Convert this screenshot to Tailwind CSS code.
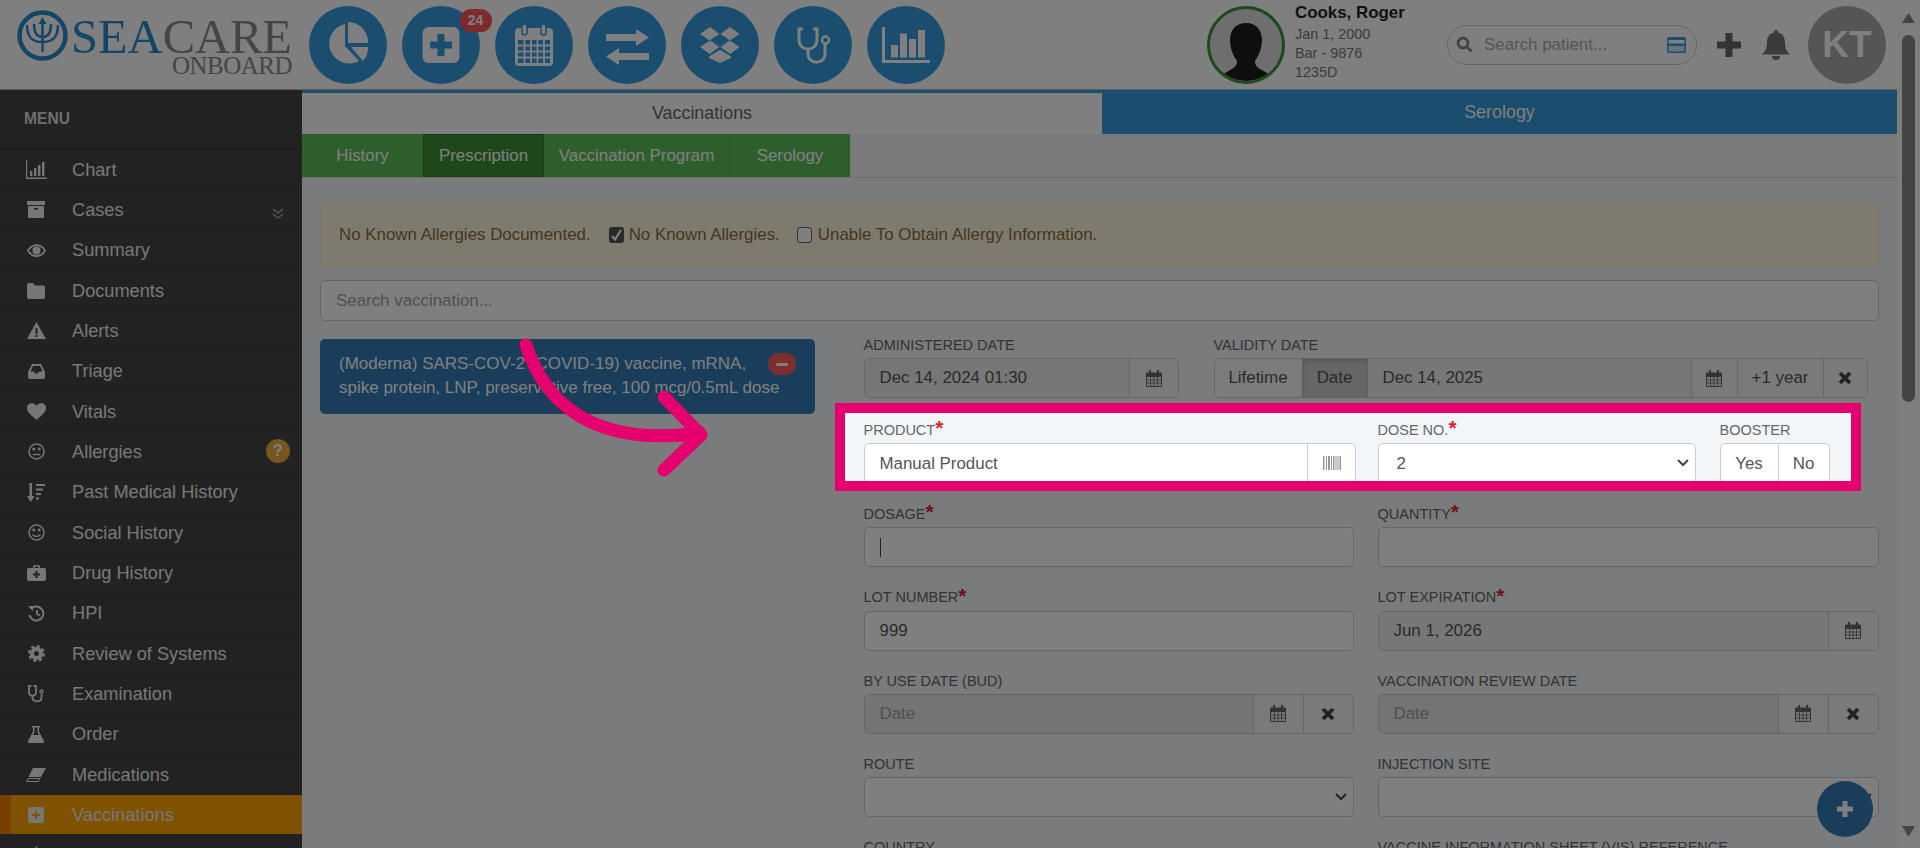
<!DOCTYPE html>
<html lang="en">
<head>
    <meta charset="UTF-8">
    <title>SeaCare Onboard - Vaccinations</title>
    <script src="https://cdn.jsdelivr.net/npm/@tailwindcss/browser@4"></script>
</head>
<body class="relative h-[848px] overflow-hidden bg-[#f4f7f8] font-['Liberation_Sans',Arial,sans-serif] text-[16.9px] text-[#666]">
    <svg class="hidden">
        <symbol id="cal" viewBox="0 0 16 17">
            <path fill="currentColor" d="M3 0h2v2.5h6V0h2v2.5h2a1 1 0 0 1 1 1V16a1 1 0 0 1-1 1H1a1 1 0 0 1-1-1V3.500a1 1 0 0 1 1-1h2zM1 7v9h14V7z"/>
            <path stroke="currentColor" stroke-width=".8" d="M1 10h14M1 13h14M4.500 7v9M8 7v9M11.500 7v9"/>
        </symbol>
        <symbol id="times" viewBox="0 0 14 14">
            <path stroke="currentColor" stroke-width="3.800" d="M2 2l10 10M12 2L2 12"/>
        </symbol>
    </svg>

    <div class="flex h-[848px]">
        <div class="flex w-[1897px] flex-col">
            <!-- top bar -->
            <header class="flex h-[90px] shrink-0 items-center border-b border-[#bbb] bg-white">
                <div class="flex h-full w-[309px] shrink-0 items-start pl-[17px]">
                    <svg class="mt-[10px] h-[51px] w-[51px] shrink-0 text-[#2a8ac9]" viewBox="0 0 51 51" fill="none" stroke="currentColor">
                        <circle cx="25.500" cy="25.500" r="23" stroke-width="4.500"/>
                        <path stroke-width="2.500" d="M25.500 10v32M10 15c0 12 5 17 15.500 17S41 27 41 15M17 14c0 9 3 13 8.500 13S34 23 34 14"/>
                        <path fill="currentColor" stroke="none" d="M25.500 7l4 7h-8z"/>
                    </svg>
                    <div class="ml-[6px] flex w-[218px] flex-col items-end pt-[17.85px] font-['Liberation_Serif',serif]">
                        <div class="text-[48.5px] leading-[37px] text-[#8a8a8a]"><span class="text-[#2a8ac9]">SEA</span>CARE</div>
                        <div class="text-[25px] leading-[21px] tracking-[-0.5px] text-[#8a8a8a]">ONBOARD</div>
                    </div>
                </div>

                <div class="flex shrink-0 gap-[15px] text-white">
                    <div class="h-[78px] w-[78px] rounded-full bg-[#349adc]">
                        <svg viewBox="0 0 78 78" fill="currentColor"><path d="M36 18A20 20 0 1 0 50 55L36 40Z"/><path d="M39 16a20 20 0 0 1 20 21H39z"/><path d="M42 41h17a20 20 0 0 1-5 14z"/></svg>
                    </div>
                    <div class="relative h-[78px] w-[78px] rounded-full bg-[#349adc]">
                        <svg viewBox="0 0 78 78"><rect x="20.500" y="21" width="37" height="36" rx="6" fill="currentColor"/><path d="M39 28v22M28 39h22" stroke="#349adc" stroke-width="7"/></svg>
                        <span class="absolute left-[57.5px] top-[3px] flex h-[23px] w-[32px] items-center justify-center rounded-full bg-[#fd5555] text-[14px] font-bold text-white">24</span>
                    </div>
                    <div class="h-[78px] w-[78px] rounded-full bg-[#349adc]">
                        <svg viewBox="0 0 78 78" fill="currentColor">
                            <rect x="20" y="22" width="38" height="38" rx="4"/>
                            <rect x="23" y="34" width="32" height="23" fill="#349adc"/>
                            <path d="M23 39.500h32M23 45.500h32M23 51.500h32M29.500 34v23M36 34v23M42.500 34v23M49 34v23" stroke="currentColor" stroke-width="1.800"/>
                            <rect x="27" y="18" width="5" height="11" rx="2.500" stroke="#349adc" stroke-width="1.500"/>
                            <rect x="46" y="18" width="5" height="11" rx="2.500" stroke="#349adc" stroke-width="1.500"/>
                        </svg>
                    </div>
                    <div class="h-[78px] w-[78px] rounded-full bg-[#349adc]">
                        <svg viewBox="0 0 78 78" fill="currentColor"><path d="M18 28h30v-5l13 8.500L48 40v-5H18z"/><path d="M61 47H31v-5l-13 8.500L31 59v-5h30z"/></svg>
                    </div>
                    <div class="h-[78px] w-[78px] rounded-full bg-[#349adc]">
                        <svg viewBox="0 0 78 78" fill="currentColor"><path d="M19 28l10-7 9.500 7-10 6.500z"/><path d="M39.500 28l9.500-7 9.500 7-9.500 6.500z"/><path d="M19 41l10-6.500 9.500 6.500-10 7z"/><path d="M39.500 41l9.500-6.500 9.500 6.500-9.500 7z"/><path d="M28 50.500l11-6.500 11 6.500v1.500L39 57l-11-5z"/></svg>
                    </div>
                    <div class="h-[78px] w-[78px] rounded-full bg-[#349adc]">
                        <svg viewBox="0 0 78 78" fill="none" stroke="currentColor" stroke-width="3"><path d="M29 23h-4v11c0 12 18 12 18 0V23h-4"/><path d="M34 43v5c0 11 17 11 17 0v-10"/><circle cx="51.500" cy="34" r="3.500" stroke-width="2.500"/></svg>
                    </div>
                    <div class="h-[78px] w-[78px] rounded-full bg-[#349adc]">
                        <svg viewBox="0 0 78 78" fill="currentColor"><path d="M15 21h3v33h45v3H15z"/><rect x="24" y="39" width="7" height="12.500"/><rect x="33" y="27.500" width="7" height="24"/><rect x="42" y="33" width="7" height="18.500"/><rect x="51" y="24" width="7" height="27.500"/></svg>
                    </div>
                </div>

                <div class="ml-[262px] h-[78px] w-[78px] shrink-0 overflow-hidden rounded-full border-[3px] border-[#3a9136] bg-[#ddd]">
                    <svg viewBox="0 0 72 72" class="h-full w-full"><path fill="#1c1c1c" d="M36 14C46 14 52 21 52 31C52 40 48 48 45 52C45 56 47 59 52 61L60 66V78H12V66L20 61C25 59 27 56 27 52C24 48 20 40 20 31C20 21 26 14 36 14Z"/></svg>
                </div>
                <div class="ml-[10px] w-[152px] shrink-0 self-start">
                    <div class="pt-[3px] font-bold leading-[20px] text-[#222]">Cooks, Roger</div>
                    <div class="mt-[1.5px] text-[14.4px] leading-[19px] text-[#777]">Jan 1, 2000</div>
                    <div class="text-[14.4px] leading-[19px] text-[#777]">Bar - 9876</div>
                    <div class="text-[14.4px] leading-[19px] text-[#777]">1235D</div>
                </div>

                <div class="flex h-[40px] w-[250px] shrink-0 items-center rounded-full border border-[#ccc] pl-[8px] pr-[10px]">
                    <svg class="h-[17px] w-[17px] shrink-0 text-[#888]" viewBox="0 0 17 17" fill="none" stroke="currentColor" stroke-width="2.800"><circle cx="7" cy="7" r="5"/><path d="M11 11l4.500 4.500"/></svg>
                    <span class="ml-[11px] text-[#aaa]">Search patient...</span>
                    <svg class="ml-auto h-[16px] w-[19px] shrink-0" viewBox="0 0 19 16"><rect width="19" height="16" rx="2" fill="#349adc"/><rect x="1.500" y="3" width="16" height="3.500" fill="#fff"/><rect x="1.500" y="9" width="16" height="5.500" fill="#cfe6f7"/></svg>
                </div>
                <svg class="ml-[20px] h-[24px] w-[24px] shrink-0 text-[#666]" viewBox="0 0 24 24"><path stroke="currentColor" stroke-width="7" d="M12 0v24M0 12h24"/></svg>
                <svg class="ml-[21px] h-[30px] w-[28px] shrink-0 text-[#777]" viewBox="0 0 28 30" fill="currentColor"><path d="M14 0a2 2 0 0 1 2 2.500c5 1 7 5 7 10 0 6 2 9 5 12H0c3-3 5-6 5-12 0-5 2-9 7-10A2 2 0 0 1 14 0z"/><path d="M10 26h8a4 4 0 0 1-8 0z"/></svg>
                <div class="ml-[18px] flex h-[78px] w-[78px] shrink-0 items-center justify-center rounded-full bg-[#aaa] text-[37px] font-bold text-white">KT</div>
            </header>

            <div class="flex min-h-0 flex-1">
                <!-- side menu -->
                <aside class="w-[302px] shrink-0 overflow-hidden bg-[#444] text-[18.2px] text-[#eee]">
                    <div class="flex h-[60px] items-center border-b border-[#333] pb-[2px] pl-[24px] text-[15.6px] font-bold text-[#ddd]">MENU</div>

                    <div class="flex h-[40.33px] items-center border-b border-[#3c3c3c]">
                        <span class="flex w-[72px] justify-center"><svg class="h-[19px] w-[21px]" viewBox="0 0 21 19" fill="currentColor"><path d="M0 0h1.200v17.500H21V19H0z"/><path d="M4 11h2.400v5H4zM8 8h2.400v8H8zM12 5h2.400v11H12zM16 2h2.400v14H16z"/></svg></span>
                        <span class="pt-[1.5px]">Chart</span>
                    </div>
                    <div class="relative flex h-[40.33px] items-center border-b border-[#3c3c3c]">
                        <span class="flex w-[72px] justify-center"><svg class="h-[17px] w-[18px]" viewBox="0 0 18 17" fill="currentColor"><path d="M0 0h18v4H0zM1 5h16v12H1zM7 7v1.500h4V7z" fill-rule="evenodd"/></svg></span>
                        <span class="pt-[1.5px]">Cases</span>
                        <svg class="absolute left-[272px] top-[18px] h-[12px] w-[12px] text-[#aaa]" viewBox="0 0 12 12" fill="none" stroke="currentColor" stroke-width="1.500"><path d="M1 1l5 4 5-4M1 6l5 4 5-4"/></svg>
                    </div>
                    <div class="flex h-[40.33px] items-center border-b border-[#3c3c3c]">
                        <span class="flex w-[72px] justify-center"><svg class="h-[13px] w-[19px]" viewBox="0 0 19 13" fill="currentColor" fill-rule="evenodd"><path d="M0 6.500C4-2 15-2 19 6.500 15 15 4 15 0 6.500zM2 6.500c3.500 6 11.500 6 15 0-3.500-6-11.500-6-15 0z"/><circle cx="9.500" cy="6.500" r="4"/></svg></span>
                        <span class="pt-[1.5px]">Summary</span>
                    </div>
                    <div class="flex h-[40.33px] items-center border-b border-[#3c3c3c]">
                        <span class="flex w-[72px] justify-center"><svg class="h-[16px] w-[18px]" viewBox="0 0 18 16" fill="currentColor"><path d="M0 2a2 2 0 0 1 2-2h4l2 2.500h8a2 2 0 0 1 2 2V14a2 2 0 0 1-2 2H2a2 2 0 0 1-2-2z"/></svg></span>
                        <span class="pt-[1.5px]">Documents</span>
                    </div>
                    <div class="flex h-[40.33px] items-center border-b border-[#3c3c3c]">
                        <span class="flex w-[72px] justify-center"><svg class="h-[17px] w-[19px]" viewBox="0 0 19 17" fill="currentColor" fill-rule="evenodd"><path d="M9.500 0L19 17H0zM8.500 6v6h2V6zM8.500 13v2h2v-2z"/></svg></span>
                        <span class="pt-[1.5px]">Alerts</span>
                    </div>
                    <div class="flex h-[40.33px] items-center border-b border-[#3c3c3c]">
                        <span class="flex w-[72px] justify-center"><svg class="h-[15px] w-[17px]" viewBox="0 0 17 15" fill="currentColor" fill-rule="evenodd"><path d="M4 0h9l4 8v5a2 2 0 0 1-2 2H2a2 2 0 0 1-2-2V8zM5 2L2.500 7.500H6l1 2h3l1-2h3.500L12 2z"/></svg></span>
                        <span class="pt-[1.5px]">Triage</span>
                    </div>
                    <div class="flex h-[40.33px] items-center border-b border-[#3c3c3c]">
                        <span class="flex w-[72px] justify-center"><svg class="h-[17px] w-[19px]" viewBox="0 0 19 17" fill="currentColor"><path d="M9.500 17C3 11 0 9 0 5a5 5 0 0 1 9.500-2A5 5 0 0 1 19 5c0 4-3 6-9.500 12z"/></svg></span>
                        <span class="pt-[1.5px]">Vitals</span>
                    </div>
                    <div class="relative flex h-[40.33px] items-center border-b border-[#3c3c3c]">
                        <span class="flex w-[72px] justify-center"><svg class="h-[17px] w-[17px]" viewBox="0 0 17 17" fill="none" stroke="currentColor" stroke-width="1.500"><circle cx="8.500" cy="8.500" r="7.500"/><path d="M5 11.500h7"/><circle cx="5.800" cy="6" r=".8"/><circle cx="11.200" cy="6" r=".8"/></svg></span>
                        <span class="pt-[1.5px]">Allergies</span>
                        <span class="absolute left-[266px] top-[7px] flex h-[24px] w-[24px] items-center justify-center rounded-full bg-[#f0a840] text-[16px] font-bold text-white">?</span>
                    </div>
                    <div class="flex h-[40.33px] items-center border-b border-[#3c3c3c]">
                        <span class="flex w-[72px] justify-center"><svg class="h-[19px] w-[18px]" viewBox="0 0 18 19" fill="currentColor"><path d="M2.500 0h2.500v13h2.500l-3.750 6L0 13h2.500z"/><path d="M9 1h9v2H9zM9 5.500h7v2H9zM9 10h5v2H9zM9 14.500h3v2H9z"/></svg></span>
                        <span class="pt-[1.5px]">Past Medical History</span>
                    </div>
                    <div class="flex h-[40.33px] items-center border-b border-[#3c3c3c]">
                        <span class="flex w-[72px] justify-center"><svg class="h-[17px] w-[17px]" viewBox="0 0 17 17" fill="none" stroke="currentColor" stroke-width="1.500"><circle cx="8.500" cy="8.500" r="7.500"/><path d="M4.500 10.500c2 2.500 6 2.500 8 0"/><circle cx="5.800" cy="6" r=".8"/><circle cx="11.200" cy="6" r=".8"/></svg></span>
                        <span class="pt-[1.5px]">Social History</span>
                    </div>
                    <div class="flex h-[40.33px] items-center border-b border-[#3c3c3c]">
                        <span class="flex w-[72px] justify-center"><svg class="h-[16px] w-[19px]" viewBox="0 0 19 16" fill="currentColor" fill-rule="evenodd"><path d="M6 3V1.500A1.500 1.500 0 0 1 7.500 0h4A1.500 1.500 0 0 1 13 1.500V3h4a2 2 0 0 1 2 2v9a2 2 0 0 1-2 2H2a2 2 0 0 1-2-2V5a2 2 0 0 1 2-2zM7.500 1.500V3h4V1.500zM8.500 6v2.500H6v2h2.500V13h2v-2.500H13v-2h-2.500V6z"/></svg></span>
                        <span class="pt-[1.5px]">Drug History</span>
                    </div>
                    <div class="flex h-[40.33px] items-center border-b border-[#3c3c3c]">
                        <span class="flex w-[72px] justify-center"><svg class="h-[17px] w-[17px]" viewBox="0 0 17 17" fill="none" stroke="currentColor" stroke-width="2"><path d="M3 4a7 7 0 1 1-1.500 6"/><path d="M9 5v4l3 1.500" stroke-width="1.800"/><path d="M0 1h5v5z" fill="currentColor" stroke="none"/></svg></span>
                        <span class="pt-[1.5px]">HPI</span>
                    </div>
                    <div class="flex h-[40.33px] items-center border-b border-[#3c3c3c]">
                        <span class="flex w-[72px] justify-center"><svg class="h-[17px] w-[17px]" viewBox="0 0 17 17" fill="none" stroke="currentColor"><circle cx="8.500" cy="8.500" r="4.500" stroke-width="4"/><circle cx="8.500" cy="8.500" r="7.300" stroke-width="2.400" stroke-dasharray="3.200 2.530"/></svg></span>
                        <span class="pt-[1.5px]">Review of Systems</span>
                    </div>
                    <div class="flex h-[40.33px] items-center border-b border-[#3c3c3c]">
                        <span class="flex w-[72px] justify-center"><svg class="h-[18px] w-[16px]" viewBox="0 0 16 18" fill="none" stroke="currentColor" stroke-width="1.800"><path d="M3.500 1H1v6c0 5 7 5 7 0V1H5.500"/><path d="M4.500 10v2.500c0 5 9 5 9 0V9"/><circle cx="13.500" cy="6.500" r="1.500" stroke-width="1.400"/></svg></span>
                        <span class="pt-[1.5px]">Examination</span>
                    </div>
                    <div class="flex h-[40.33px] items-center border-b border-[#3c3c3c]">
                        <span class="flex w-[72px] justify-center"><svg class="h-[17px] w-[16px]" viewBox="0 0 16 17" fill="currentColor" fill-rule="evenodd"><path d="M4 0h8v1.500h-1v4l5 9.500a1.300 1.300 0 0 1-1 2H1a1.300 1.300 0 0 1-1-2l5-9.500v-4H4zM6.500 1.500v4.500L5 9h6L9.500 6V1.500z"/></svg></span>
                        <span class="pt-[1.5px]">Order</span>
                    </div>
                    <div class="flex h-[40.33px] items-center border-b border-[#3c3c3c]">
                        <span class="flex w-[72px] justify-center"><svg class="h-[14px] w-[20px]" viewBox="0 0 20 14" fill="currentColor"><path d="M7 0h13l-5 9H2.500z"/><path d="M2 10h12.500l-2 4H0zM2.500 11l-.8 2h10.300l1-2z" fill-rule="evenodd"/></svg></span>
                        <span class="pt-[1.5px]">Medications</span>
                    </div>
                    <div class="flex h-[39px] items-center bg-[#ffa500]">
                        <span class="h-full w-[11px] shrink-0 bg-[#f47f00]"></span>
                        <span class="flex w-[61px] pl-[17px]"><svg class="h-[16px] w-[16px]" viewBox="0 0 16 16" fill="currentColor" fill-rule="evenodd"><path d="M3 0h10a3 3 0 0 1 3 3v10a3 3 0 0 1-3 3H3a3 3 0 0 1-3-3V3a3 3 0 0 1 3-3zM7 4v3H4v2h3v3h2V9h3V7H9V4z"/></svg></span>
                        <span class="pt-[1.5px]">Vaccinations</span>
                    </div>
                    <div class="flex h-[40.33px] items-center">
                        <span class="flex w-[72px] justify-center"><svg class="h-[17px] w-[17px]" viewBox="0 0 17 17" fill="currentColor"><path d="M8.500 0L12 6H5z"/></svg></span>
                        <span class="pt-[1.5px]">Assessment</span>
                    </div>
                </aside>

                <!-- content -->
                <main class="flex min-w-0 flex-1 flex-col">
                    <div class="flex h-[44px] shrink-0 text-[17.9px]">
                        <div class="flex w-[800px] items-center justify-center border-t-[3px] border-[#349adc] bg-white text-[#666]">Vaccinations</div>
                        <div class="flex flex-1 items-center justify-center bg-[#349adc] text-white">Serology</div>
                    </div>
                    <div class="flex h-[44px] shrink-0 border-b border-[#ddd]">
                        <div class="flex w-[121px] items-center justify-center bg-[#5fbc5b] text-white">History</div>
                        <div class="flex w-[121px] items-center justify-center border border-[#2c7a29] bg-[#3c8f38] text-white">Prescription</div>
                        <div class="flex w-[186px] items-center justify-center border-r border-[#55ad52] bg-[#5fbc5b] text-white">Vaccination Program</div>
                        <div class="flex w-[120px] items-center justify-center bg-[#5fbc5b] text-white">Serology</div>
                    </div>

                    <div class="px-[18px] pt-[24px]">
                        <div class="flex h-[66px] items-center rounded-[5px] border border-[#f0ead0] bg-[#fcf7dc] px-[18px] text-[#8a6d3b]">
                            <span class="mr-[18px]">No Known Allergies Documented.</span>
                            <span class="flex h-[16px] w-[15px] items-center justify-center rounded-[3px] bg-[#555]"><svg class="h-[12px] w-[11px]" viewBox="0 0 11 12" fill="none" stroke="#fff" stroke-width="2.200"><path d="M1 7l3 3.500L10 1"/></svg></span>
                            <span class="ml-[5px] mr-[17px]">No Known Allergies.</span>
                            <span class="h-[16px] w-[15px] rounded-[3px] border border-[#666] bg-white"></span>
                            <span class="ml-[6px]">Unable To Obtain Allergy Information.</span>
                        </div>

                        <div class="mt-[12px] flex h-[41px] items-center rounded-[5px] border border-[#ccc] bg-white px-[15px] text-[#a0a0a0]">Search vaccination...</div>

                        <div class="flex pt-[12px]">
                            <div class="relative mt-[6px] h-[75px] w-[495px] shrink-0 rounded-[5px] bg-[#337ab7] pl-[19px] pt-[13px] text-[17px] leading-[24.4px] text-white">
                                (Moderna) SARS-COV-2 (COVID-19) vaccine, mRNA,<br>spike protein, LNP, preservative free, 100 mcg/0.5mL dose
                                <span class="absolute right-[19px] top-[14px] flex h-[22px] w-[28px] items-center justify-center rounded-full bg-[#fc5a5a]"><span class="h-[3px] w-[12px] rounded-sm bg-white"></span></span>
                            </div>

                            <div class="ml-[48.5px] w-[1016px] shrink-0">
                                <div class="flex h-[85.8px] gap-[35px]">
                                    <div class="w-[315px]">
                                        <div class="flex h-[25px] items-center text-[14.5px]">ADMINISTERED DATE</div>
                                        <div class="flex h-[40px] overflow-hidden rounded-[5px] border border-[#ccc]">
                                            <div class="flex flex-1 items-center bg-[#eee] pl-[15px] text-[#555]">Dec 14, 2024 01:30</div>
                                            <div class="flex w-[49px] items-center justify-center border-l border-[#ccc] bg-[#f4f4f4] text-[#666]"><svg class="h-[17px] w-[16px]"><use href="#cal"/></svg></div>
                                        </div>
                                    </div>
                                    <div class="w-[654px]">
                                        <div class="flex h-[25px] items-center text-[14.5px]">VALIDITY DATE</div>
                                        <div class="flex h-[40px] overflow-hidden rounded-[5px] border border-[#ccc] text-[#555]">
                                            <div class="flex w-[87px] items-center justify-center bg-[#f8f8f8]">Lifetime</div>
                                            <div class="flex w-[66px] items-center justify-center bg-[#ccc] shadow-[inset_0_2px_4px_rgba(0,0,0,0.15)]">Date</div>
                                            <div class="flex flex-1 items-center bg-[#eee] pl-[15px]">Dec 14, 2025</div>
                                            <div class="flex w-[46px] items-center justify-center border-l border-[#ccc] bg-[#f4f4f4] text-[#666]"><svg class="h-[17px] w-[16px]"><use href="#cal"/></svg></div>
                                            <div class="flex w-[86px] items-center justify-center border-l border-[#ccc] bg-[#f4f4f4]">+1 year</div>
                                            <div class="flex w-[44px] items-center justify-center border-l border-[#ccc] bg-[#f4f4f4] text-[#444]"><svg class="h-[14px] w-[14px]"><use href="#times"/></svg></div>
                                        </div>
                                    </div>
                                </div>

                                <!-- highlighted row, sits above the dim layer -->
                                <div class="relative h-[83.4px]">
                                    <div class="absolute -left-[29px] -top-[15.5px] z-20 h-[88px] w-[1026px] overflow-hidden border-[10px] border-[#e6006e] bg-[#f3f6f8] pl-[19px] pt-[5px]">
                                        <div class="flex">
                                            <div class="w-[492.5px]">
                                                <div class="flex h-[25px] items-center text-[14.5px]">PRODUCT<span class="-mt-[6px] text-[21px] font-bold leading-none text-[#d9232d]">*</span></div>
                                                <div class="flex h-[40px] overflow-hidden rounded-[5px] border border-[#ccc] bg-white text-[#555]">
                                                    <div class="flex flex-1 items-center pl-[15px]">Manual Product</div>
                                                    <div class="flex w-[48px] items-center justify-center border-l border-[#ccc]">
                                                        <svg class="h-[14px] w-[18px]" viewBox="0 0 18 14" fill="#999"><path d="M0 0h1.500v14H0zM3 0h1v14H3zM5 0h2v14H5zM8 0h1v14H8zM10 0h1.500v14H10zM12.500 0h1v14h-1zM14.500 0h1v14h-1zM16.500 0h1.500v14h-1.500z"/></svg>
                                                    </div>
                                                </div>
                                            </div>
                                            <div class="ml-[21.5px] w-[318px]">
                                                <div class="flex h-[25px] items-center text-[14.5px]">DOSE NO.<span class="-mt-[6px] text-[21px] font-bold leading-none text-[#d9232d]">*</span></div>
                                                <div class="flex h-[40px] items-center justify-between rounded-[5px] border border-[#ccc] bg-white pl-[18px] pr-[6px] text-[#555]">
                                                    <span>2</span>
                                                    <svg class="h-[8px] w-[12px] text-[#444]" viewBox="0 0 12 8" fill="none" stroke="currentColor" stroke-width="2"><path d="M1 1l5 5 5-5"/></svg>
                                                </div>
                                            </div>
                                            <div class="ml-[24px] w-[110px]">
                                                <div class="flex h-[25px] items-center text-[14.5px]">BOOSTER</div>
                                                <div class="flex h-[40px] overflow-hidden rounded-[5px] border border-[#ccc] bg-white text-[#555]">
                                                    <div class="flex w-[57px] items-center justify-center">Yes</div>
                                                    <div class="flex flex-1 items-center justify-center border-l border-[#ccc]">No</div>
                                                </div>
                                            </div>
                                        </div>
                                    </div>
                                </div>

                                <div class="grid grid-cols-[490px_501px] gap-x-[24px] text-[#555]">
                                    <div class="h-[83.4px]">
                                        <div class="flex h-[25px] items-center text-[14.5px] text-[#666]">DOSAGE<span class="-mt-[6px] text-[21px] font-bold leading-none text-[#d9232d]">*</span></div>
                                        <div class="flex h-[40px] items-center rounded-[5px] border border-[#ccc] bg-white pl-[15px]"><span class="h-[19px] w-[1.5px] bg-[#444]"></span></div>
                                    </div>
                                    <div class="h-[83.4px]">
                                        <div class="flex h-[25px] items-center text-[14.5px] text-[#666]">QUANTITY<span class="-mt-[6px] text-[21px] font-bold leading-none text-[#d9232d]">*</span></div>
                                        <div class="h-[40px] rounded-[5px] border border-[#ccc] bg-white"></div>
                                    </div>
                                    <div class="h-[83.4px]">
                                        <div class="flex h-[25px] items-center text-[14.5px] text-[#666]">LOT NUMBER<span class="-mt-[6px] text-[21px] font-bold leading-none text-[#d9232d]">*</span></div>
                                        <div class="flex h-[40px] items-center rounded-[5px] border border-[#ccc] bg-white pl-[15px]">999</div>
                                    </div>
                                    <div class="h-[83.4px]">
                                        <div class="flex h-[25px] items-center text-[14.5px] text-[#666]">LOT EXPIRATION<span class="-mt-[6px] text-[21px] font-bold leading-none text-[#d9232d]">*</span></div>
                                        <div class="flex h-[40px] overflow-hidden rounded-[5px] border border-[#ccc]">
                                            <div class="flex flex-1 items-center bg-[#eee] pl-[15px]">Jun 1, 2026</div>
                                            <div class="flex w-[50px] items-center justify-center border-l border-[#ccc] bg-[#f4f4f4] text-[#666]"><svg class="h-[17px] w-[16px]"><use href="#cal"/></svg></div>
                                        </div>
                                    </div>
                                    <div class="h-[83.4px]">
                                        <div class="flex h-[25px] items-center text-[14.5px] text-[#666]">BY USE DATE (BUD)</div>
                                        <div class="flex h-[40px] overflow-hidden rounded-[5px] border border-[#ccc]">
                                            <div class="flex flex-1 items-center bg-[#e8e8e8] pl-[15px] text-[#a0a0a0]">Date</div>
                                            <div class="flex w-[50px] items-center justify-center border-l border-[#ccc] bg-[#f4f4f4] text-[#666]"><svg class="h-[17px] w-[16px]"><use href="#cal"/></svg></div>
                                            <div class="flex w-[50px] items-center justify-center border-l border-[#ccc] bg-[#f4f4f4] text-[#444]"><svg class="h-[14px] w-[14px]"><use href="#times"/></svg></div>
                                        </div>
                                    </div>
                                    <div class="h-[83.4px]">
                                        <div class="flex h-[25px] items-center text-[14.5px] text-[#666]">VACCINATION REVIEW DATE</div>
                                        <div class="flex h-[40px] overflow-hidden rounded-[5px] border border-[#ccc]">
                                            <div class="flex flex-1 items-center bg-[#e8e8e8] pl-[15px] text-[#a0a0a0]">Date</div>
                                            <div class="flex w-[50px] items-center justify-center border-l border-[#ccc] bg-[#f4f4f4] text-[#666]"><svg class="h-[17px] w-[16px]"><use href="#cal"/></svg></div>
                                            <div class="flex w-[50px] items-center justify-center border-l border-[#ccc] bg-[#f4f4f4] text-[#444]"><svg class="h-[14px] w-[14px]"><use href="#times"/></svg></div>
                                        </div>
                                    </div>
                                    <div class="h-[83.4px]">
                                        <div class="flex h-[25px] items-center text-[14.5px] text-[#666]">ROUTE</div>
                                        <div class="flex h-[40px] items-center justify-end rounded-[5px] border border-[#ccc] bg-white pr-[6px]"><svg class="h-[8px] w-[12px] text-[#444]" viewBox="0 0 12 8" fill="none" stroke="currentColor" stroke-width="2"><path d="M1 1l5 5 5-5"/></svg></div>
                                    </div>
                                    <div class="h-[83.4px]">
                                        <div class="flex h-[25px] items-center text-[14.5px] text-[#666]">INJECTION SITE</div>
                                        <div class="flex h-[40px] items-center justify-end rounded-[5px] border border-[#ccc] bg-white pr-[6px]"><svg class="h-[8px] w-[12px] text-[#444]" viewBox="0 0 12 8" fill="none" stroke="currentColor" stroke-width="2"><path d="M1 1l5 5 5-5"/></svg></div>
                                    </div>
                                    <div class="h-[83.4px]">
                                        <div class="flex h-[25px] items-center text-[14.5px] text-[#666]">COUNTRY</div>
                                    </div>
                                    <div class="h-[83.4px]">
                                        <div class="flex h-[25px] items-center text-[14.5px] text-[#666]">VACCINE INFORMATION SHEET (VIS) REFERENCE</div>
                                    </div>
                                </div>
                            </div>
                        </div>
                    </div>
                </main>
            </div>
        </div>

        <!-- scrollbar -->
        <div class="flex w-[23px] flex-col items-center bg-[#fdfdfd] pt-[13px] pb-[11px]">
            <svg class="h-[10px] w-[13px] shrink-0 text-[#888]" viewBox="0 0 13 10" fill="currentColor"><path d="M6.500 0L13 10H0z"/></svg>
            <div class="mt-[12px] h-[367px] w-[13px] rounded-full bg-[#888]"></div>
            <svg class="mt-auto h-[11px] w-[13px] shrink-0 text-[#888]" viewBox="0 0 13 11" fill="currentColor"><path d="M0 0h13L6.500 11z"/></svg>
        </div>
    </div>

    <!-- floating add button -->
    <div class="absolute left-[1816.5px] top-[781px] flex h-[56px] w-[56px] items-center justify-center rounded-full bg-[#337ab7]">
        <svg class="h-[20px] w-[20px] text-white" viewBox="0 0 20 20"><path stroke="currentColor" stroke-width="5" d="M10 2v16M2 10h16"/></svg>
    </div>

    <!-- dim layer and pointer arrow -->
    <div class="absolute inset-0 z-10 bg-black/50"></div>
    <svg class="pointer-events-none absolute left-0 top-0 z-30 h-[848px] w-[1920px]" viewBox="0 0 1920 848" fill="none" stroke="#e6006e" stroke-width="13" stroke-linecap="round" stroke-linejoin="round">
        <path d="M526 345C544 400 590 448 700 433"/>
        <path d="M664 397L701 435L664 470"/>
    </svg>
</body>
</html>
